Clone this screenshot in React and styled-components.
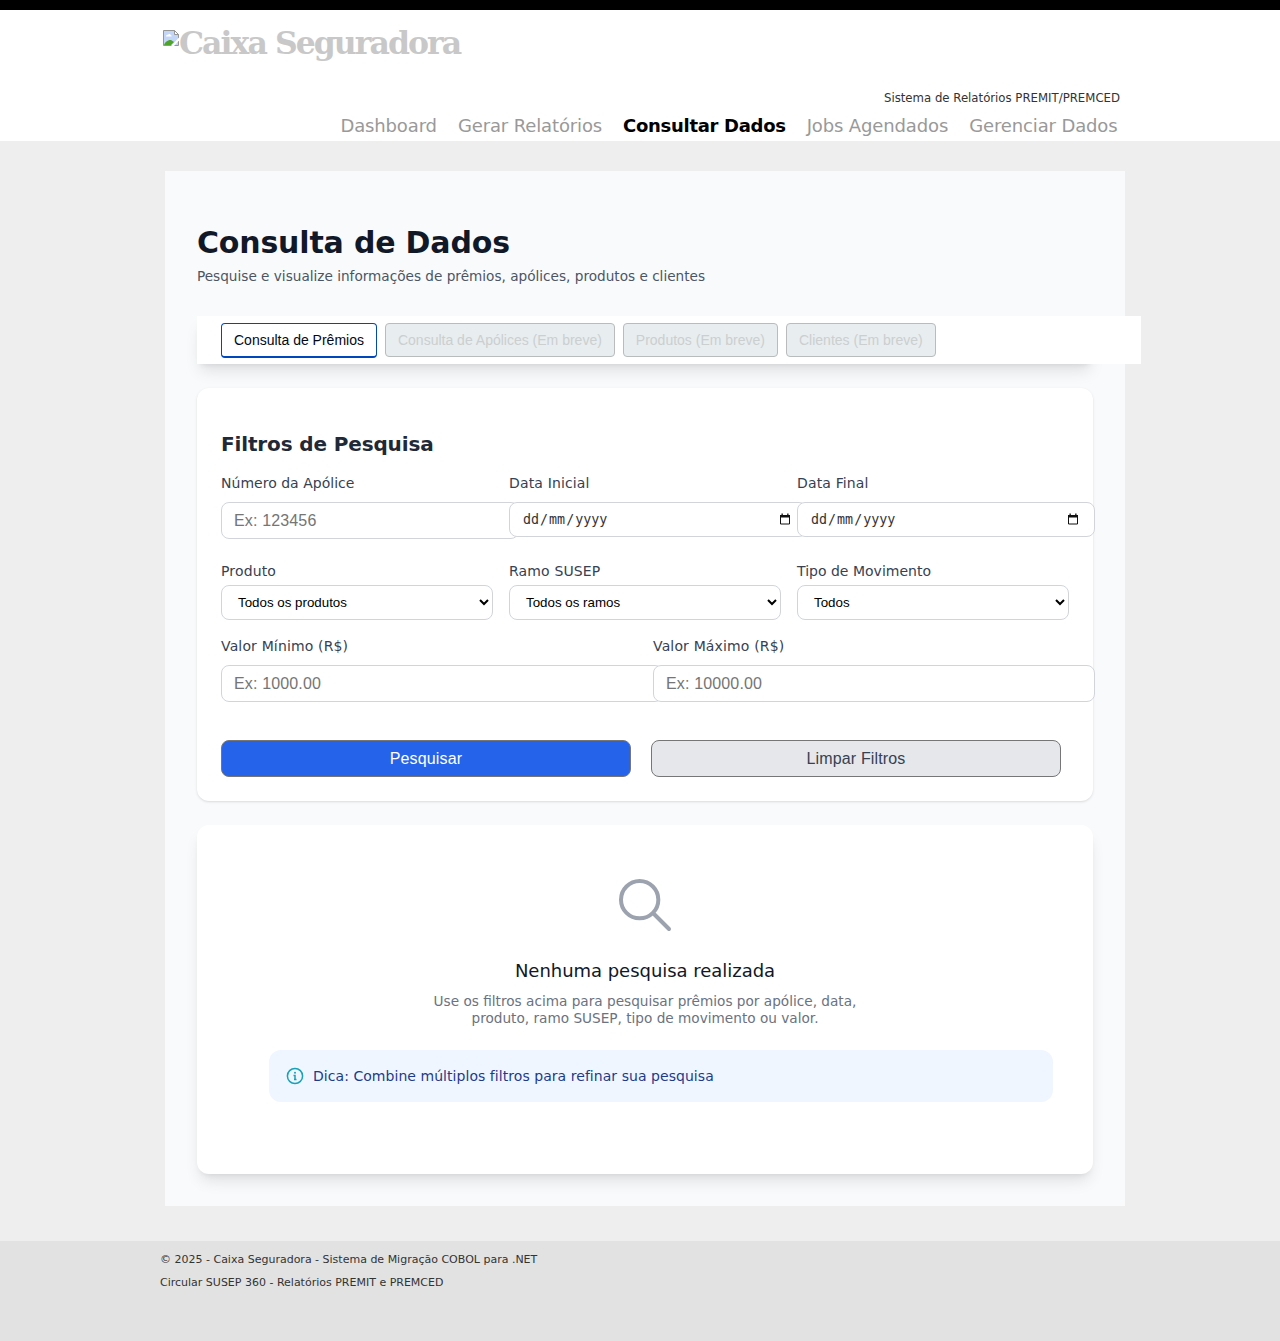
import React from 'react';
import styled, { createGlobalStyle } from 'styled-components';

const GlobalStyle = createGlobalStyle`
  body {
    margin: 0;
    background: #eee;
    font-family: Verdana, "DejaVu Sans", sans-serif;
    color: #333;
  }
`;

const Page = styled.div`
  display: flex;
  flex-direction: column;
  min-height: 1341px;
  overflow-x: hidden;
`;

const Header = styled.header`
  box-sizing: border-box;
  height: 141px;
  border-top: 10px solid #000;
  background: #fff;
`;

const HeaderInner = styled.div`
  box-sizing: border-box;
  width: 960px;
  height: 131px;
  margin: 0 auto;
  display: flex;
  flex-direction: column;
`;

const Logo = styled.div`
  display: flex;
  align-items: flex-start;
  height: 60px;
  padding: 20px 0 0 3px;
`;

const LogoText = styled.span`
  font: bold 31.5px/30px Rockwell, "DejaVu Serif", serif;
  letter-spacing: -1.95px;
  color: #c8c8c8;
  margin-top: -2px;
`;

const SystemName = styled.div`
  text-align: right;
  font-size: 11.73px;
  line-height: 16px;
`;

const Nav = styled.nav`
  display: flex;
  justify-content: flex-end;
  gap: 21px;
  padding: 8px 2.5px 0 0;
`;

const NavLink = styled.a`
  font-size: 18px;
  line-height: 24px;
  letter-spacing: ${(p) => (p.$active ? '-0.3px' : '-0.13px')};
  font-weight: ${(p) => (p.$active ? 'bold' : 'normal')};
  color: ${(p) => (p.$active ? '#000' : '#999')};
`;

const Main = styled.main`
  box-sizing: border-box;
  width: 960px;
  height: 1035px;
  margin: 30px 0 35px 165px;
  padding: 52px 32px 32px;
  background: #f9fafc;
`;

const Title = styled.h1`
  margin: 0;
  font-size: 30px;
  line-height: 40px;
  letter-spacing: -0.18px;
  color: #111827;
`;

const Subtitle = styled.p`
  margin: 4px 0 0;
  font-size: 13.63px;
  line-height: 18px;
  color: #4b5563;
`;

const TabsShadow = styled.div`
  height: 48px;
  margin: 31px 0 24px;
  box-shadow: 0 10px 15px -3px rgba(0, 0, 0, 0.1), 0 4px 6px -4px rgba(0, 0, 0, 0.1);
`;

const Tabs = styled.div`
  box-sizing: border-box;
  width: 944px;
  height: 48px;
  padding: 7px 24px;
  display: flex;
  align-items: flex-start;
  gap: 8px;
  background: #fff;
`;

const Tab = styled.button`
  box-sizing: border-box;
  height: ${(p) => (p.disabled ? 34 : 35)}px;
  padding: 0 12px;
  font: 14px/32px Arial, "Liberation Sans", sans-serif;
  white-space: nowrap;
  border: 1px solid ${(p) => (p.disabled ? '#b8bcbc' : '#0047bb')};
  border-bottom-width: ${(p) => (p.disabled ? 1 : 2)}px;
  border-radius: 4px;
  background: ${(p) => (p.disabled ? '#e8edef' : '#fff')};
  color: ${(p) => (p.disabled ? '#cbcfcf' : '#000a1a')};
`;

const FilterCard = styled.section`
  box-sizing: border-box;
  height: 413px;
  padding: 40px 24px 24px;
  border-radius: 12px;
  background: #fff;
  box-shadow: 0 1px 3px rgba(0, 0, 0, 0.1), 0 1px 2px -1px rgba(0, 0, 0, 0.1);
`;

const CardTitle = styled.h2`
  margin: 0 0 15px;
  font-size: 20px;
  line-height: 32px;
  letter-spacing: -0.14px;
  color: #1f2937;
`;

const FieldGrid = styled.div`
  display: grid;
  grid-template-columns: repeat(${(p) => p.$columns}, minmax(0, 1fr));
  gap: 16px;
  height: ${(p) => p.$height}px;
`;

const Field = styled.label`
  display: flex;
  flex-direction: column;
  align-items: flex-start;
  gap: ${(p) => p.$gap}px;
`;

const Label = styled.span`
  font-size: 14px;
  line-height: 17px;
  letter-spacing: ${(p) => p.$spacing || 0.15}px;
  color: #374151;
`;

const Input = styled.input`
  box-sizing: border-box;
  width: calc(100% + 26px);
  height: 37px;
  padding: 0 12px;
  font: 16px Arial, "Liberation Sans", sans-serif;
  letter-spacing: 0.15px;
  border: 1px solid #d1d5db;
  border-radius: 8px;
  background: #fff;
  &::placeholder {
    color: #757575;
  }
`;

const DateBox = styled.div`
  box-sizing: border-box;
  width: calc(100% + 26px);
  height: 35px;
  padding: 0 14px 0 12px;
  display: flex;
  align-items: center;
  font: 13.333px "DejaVu Sans Mono", monospace;
  color: #333;
  border: 1px solid #d1d5db;
  border-radius: 8px;
  background: #fff;
`;

const DatePart = styled.span`
  padding: 0 1px;
`;

const CalendarIcon = styled.svg`
  width: 13px;
  height: 13px;
  margin-left: auto;
`;

const Select = styled.select`
  box-sizing: border-box;
  width: 100%;
  height: 35px;
  padding: 0 12px;
  font: 13.333px Arial, "Liberation Sans", sans-serif;
  color: #000;
  border: 1px solid #d1d5db;
  border-radius: 8px;
  background: #fff;
`;

const Actions = styled.div`
  display: grid;
  grid-template-columns: 410px 410px;
  gap: 20px;
`;

const Action = styled.button`
  box-sizing: border-box;
  height: 37px;
  font: 16px Arial, "Liberation Sans", sans-serif;
  letter-spacing: 0.15px;
  border: 1px solid #767676;
  border-radius: 8px;
  background: ${(p) => (p.$primary ? '#2563eb' : '#e5e7eb')};
  color: ${(p) => (p.$primary ? '#fff' : '#374151')};
`;

const EmptyCard = styled.section`
  box-sizing: border-box;
  height: 349px;
  margin-top: 24px;
  padding: 48px 24px 24px;
  display: flex;
  flex-direction: column;
  align-items: center;
  border-radius: 12px;
  background: #fff;
  box-shadow: 0 10px 15px -3px rgba(0, 0, 0, 0.1), 0 4px 6px -4px rgba(0, 0, 0, 0.1);
`;

const EmptyTitle = styled.h3`
  margin: 22px 0 10px;
  font-size: 18px;
  font-weight: normal;
  line-height: 24px;
  letter-spacing: -0.03px;
  color: #111827;
`;

const EmptyText = styled.p`
  width: 448px;
  margin: 0 0 23px;
  text-align: center;
  font-size: 13.65px;
  line-height: 17px;
  color: #6b7280;
`;

const Tip = styled.div`
  box-sizing: border-box;
  align-self: stretch;
  height: 52px;
  margin: 0 16px 0 48px;
  padding: 0 16px;
  display: flex;
  align-items: center;
  gap: 8px;
  border-radius: 12px;
  background: #eff6ff;
  font-size: 14px;
  letter-spacing: 0.05px;
  color: #1e3a8a;
`;

const Footer = styled.footer`
  flex: 1;
  padding: 7px 160px 0;
  background: #e2e2e2;
`;

const FooterLine = styled.p`
  margin: 0;
  font-size: 11px;
  line-height: 23px;
`;

function BrokenImage() {
  return (
    <svg width="16" height="16" viewBox="0 0 16 16">
      <path d="M.5.5h11l4 4v11H.5z" fill="#c3d6f7" stroke="#969696" />
      <path d="M3 6.500c0-1.300 1-2 2-1.700.5-1.200 2.600-1 2.800.5 1 0 1.400 1.200.3 1.200z" fill="#fff" />
      <path d="M1 15c1-3 4-5.500 7-5l3 2-3 3z" fill="#4ea32a" />
      <path d="M11.500.5v4h4z" fill="#fff" stroke="#969696" />
      <path d="M16 7.500v3L11 16H8z" fill="#fff" />
    </svg>
  );
}

function DateField({ label }) {
  return (
    <Field as="div" $gap={10}>
      <Label>{label}</Label>
      <DateBox>
        <DatePart>dd</DatePart>/<DatePart>mm</DatePart>/<DatePart>yyyy</DatePart>
        <CalendarIcon viewBox="0 0 13 13">
          <path d="M1.500 2.500h9v8.500h-9z" fill="none" stroke="#111" />
          <path d="M1 2h10v2.500H1zM2.500.6h1.300V2H2.500zM8.200.6h1.300V2H8.200z" fill="#111" />
        </CalendarIcon>
      </DateBox>
    </Field>
  );
}

function TextField({ label, placeholder, spacing }) {
  return (
    <Field $gap={10}>
      <Label $spacing={spacing}>{label}</Label>
      <Input placeholder={placeholder} />
    </Field>
  );
}

function SelectField({ label, option, spacing }) {
  return (
    <Field $gap={5}>
      <Label $spacing={spacing}>{label}</Label>
      <Select>
        <option>{option}</option>
      </Select>
    </Field>
  );
}

export default function App() {
  return (
    <Page>
      <GlobalStyle />
      <Header>
        <HeaderInner>
          <Logo>
            <BrokenImage />
            <LogoText>Caixa Seguradora</LogoText>
          </Logo>
          <SystemName>Sistema de Relatórios PREMIT/PREMCED</SystemName>
          <Nav>
            <NavLink>Dashboard</NavLink>
            <NavLink>Gerar Relatórios</NavLink>
            <NavLink $active>Consultar Dados</NavLink>
            <NavLink>Jobs Agendados</NavLink>
            <NavLink>Gerenciar Dados</NavLink>
          </Nav>
        </HeaderInner>
      </Header>
      <Main>
        <Title>Consulta de Dados</Title>
        <Subtitle>Pesquise e visualize informações de prêmios, apólices, produtos e clientes</Subtitle>
        <TabsShadow>
          <Tabs>
            <Tab>Consulta de Prêmios</Tab>
            <Tab disabled>Consulta de Apólices (Em breve)</Tab>
            <Tab disabled>Produtos (Em breve)</Tab>
            <Tab disabled>Clientes (Em breve)</Tab>
          </Tabs>
        </TabsShadow>
        <FilterCard>
          <CardTitle>Filtros de Pesquisa</CardTitle>
          <FieldGrid $columns={3} $height={88}>
            <TextField label="Número da Apólice" placeholder="Ex: 123456" spacing={0.02} />
            <DateField label="Data Inicial" />
            <DateField label="Data Final" />
          </FieldGrid>
          <FieldGrid $columns={3} $height={75}>
            <SelectField label="Produto" option="Todos os produtos" />
            <SelectField label="Ramo SUSEP" option="Todos os ramos" />
            <SelectField label="Tipo de Movimento" option="Todos" spacing={0.01} />
          </FieldGrid>
          <FieldGrid $columns={2} $height={102}>
            <TextField label="Valor Mínimo (R$)" placeholder="Ex: 1000.00" />
            <TextField label="Valor Máximo (R$)" placeholder="Ex: 10000.00" />
          </FieldGrid>
          <Actions>
            <Action $primary>Pesquisar</Action>
            <Action>Limpar Filtros</Action>
          </Actions>
        </FilterCard>
        <EmptyCard>
          <svg width="64" height="64" viewBox="0 0 24 24" fill="none" stroke="#9ca3af" strokeWidth="1.5" strokeLinecap="round" strokeLinejoin="round">
            <path d="M21 21l-6-6m2-5a7 7 0 11-14 0 7 7 0 0114 0z" />
          </svg>
          <EmptyTitle>Nenhuma pesquisa realizada</EmptyTitle>
          <EmptyText>Use os filtros acima para pesquisar prêmios por apólice, data, produto, ramo SUSEP, tipo de movimento ou valor.</EmptyText>
          <Tip>
            <svg width="20" height="20" viewBox="0 0 20 20" fill="none" stroke="#17a2b8" strokeWidth="1.5">
              <circle cx="10" cy="10" r="7.600" />
              <circle cx="10" cy="6.700" r="1" fill="#17a2b8" stroke="none" />
              <path d="M8.500 9.500H10v4M9 13.500h2.500" />
            </svg>
            Dica: Combine múltiplos filtros para refinar sua pesquisa
          </Tip>
        </EmptyCard>
      </Main>
      <Footer>
        <FooterLine>© 2025 - Caixa Seguradora - Sistema de Migração COBOL para .NET</FooterLine>
        <FooterLine>Circular SUSEP 360 - Relatórios PREMIT e PREMCED</FooterLine>
      </Footer>
    </Page>
  );
}
